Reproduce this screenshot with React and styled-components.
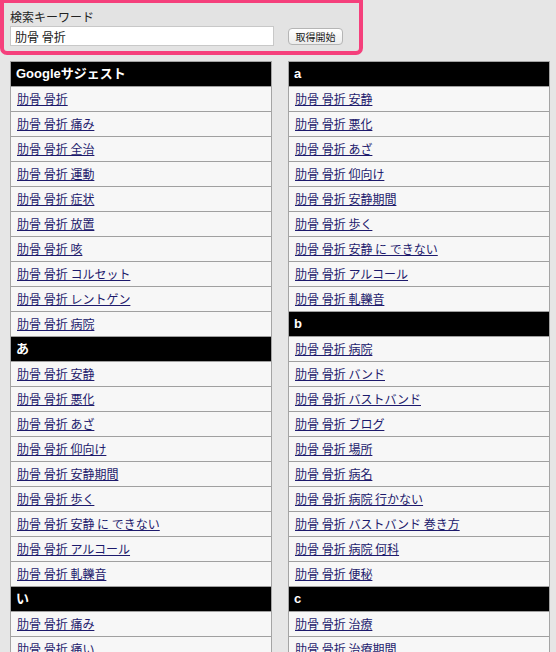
import React from 'react';
import styled, { createGlobalStyle } from 'styled-components';

const GlobalStyle = createGlobalStyle`
  html, body {
    margin: 0;
    padding: 0;
    background: #e6e6e6;
  }
  body {
    font-family: "Liberation Sans", "Noto Sans CJK JP", sans-serif;
    color: #111;
  }
`;

const kw = '肋骨 骨折';

const leftColumn = [
  { title: 'Googleサジェスト', items: ['', '痛み', '全治', '運動', '症状', '放置', '咳', 'コルセット', 'レントゲン', '病院'] },
  { title: 'あ', items: ['安静', '悪化', 'あざ', '仰向け', '安静期間', '歩く', '安静 に できない', 'アルコール', '軋轢音'] },
  { title: 'い', items: ['痛み', '痛い', '痛み 期間', '痛み止め'] },
];

const rightColumn = [
  { title: 'a', items: ['安静', '悪化', 'あざ', '仰向け', '安静期間', '歩く', '安静 に できない', 'アルコール', '軋轢音'] },
  { title: 'b', items: ['病院', 'バンド', 'バストバンド', 'ブログ', '場所', '病名', '病院 行かない', 'バストバンド 巻き方', '病院 何科', '便秘'] },
  { title: 'c', items: ['治療', '治療期間', '治療法', '治る'] },
];

const App = () => {
  return (
    <Page>
      <GlobalStyle />
      <SearchBox>
        <Label>検索キーワード</Label>
        <SearchRow>
          <KeywordInput defaultValue={kw} />
          <StartButton>取得開始</StartButton>
        </SearchRow>
      </SearchBox>

      <Columns>
        {[leftColumn, rightColumn].map((col, ci) => (
          <Column key={ci}>
            {col.map(group => (
              <React.Fragment key={group.title}>
                <GroupHeader>{group.title}</GroupHeader>
                {group.items.map((item, i) => (
                  <Row key={i}>
                    <SuggestLink href="#">{item ? `${kw} ${item}` : kw}</SuggestLink>
                  </Row>
                ))}
              </React.Fragment>
            ))}
          </Column>
        ))}
      </Columns>
    </Page>
  );
};

export default App;

const Page = styled.div`
  width: 556px;
  height: 652px;
  overflow: hidden;
`;

const SearchBox = styled.div`
  box-sizing: border-box;
  width: 363px;
  height: 55px;
  border: 4px solid #f5407c;
  border-top-width: 3px;
  border-radius: 0 0 7px 7px;
  background: #e3e3e3;
  padding: 6px 0 0 6px;
`;

const Label = styled.div`
  font-size: 12px;
  line-height: 16px;
  font-family: "Noto Sans CJK JP", sans-serif;
  color: #222;
`;

const SearchRow = styled.div`
  display: flex;
  align-items: center;
  margin-top: 1px;
`;

const KeywordInput = styled.input`
  box-sizing: border-box;
  width: 264px;
  height: 20px;
  border: 1px solid #c8c8c8;
  background: #fff;
  padding: 0 4px;
  margin: 0;
  font-size: 12px;
  font-family: "Noto Sans CJK JP", sans-serif;
  color: #222;
  outline: none;
`;

const StartButton = styled.button`
  box-sizing: border-box;
  margin-left: 14px;
  width: 55px;
  height: 17px;
  padding: 0;
  border: 1px solid #b5b5b5;
  border-radius: 4px;
  background: linear-gradient(#ffffff, #ececec);
  font-size: 10px;
  line-height: 15px;
  font-family: "Noto Sans CJK JP", sans-serif;
  color: #222;
`;

const Columns = styled.div`
  display: flex;
  gap: 16px;
  padding: 6px 0 0 10px;
`;

const Column = styled.div`
  box-sizing: border-box;
  width: 262px;
  border: 1px solid #a4a4a4;
  border-bottom: none;
  background: #f7f7f7;
`;

const GroupHeader = styled.div`
  height: 24px;
  line-height: 24px;
  border-bottom: 1px solid #a0a0a0;
  background: #000;
  color: #fff;
  font-weight: bold;
  font-size: 13px;
  padding-left: 5px;
`;

const Row = styled.div`
  height: 24px;
  line-height: 24px;
  border-bottom: 1px solid #a0a0a0;
  padding-left: 6px;
  font-size: 12px;
  font-family: "Noto Sans CJK JP", sans-serif;
`;

const SuggestLink = styled.a`
  color: #1d1a6c;
  text-decoration: underline;
`;
